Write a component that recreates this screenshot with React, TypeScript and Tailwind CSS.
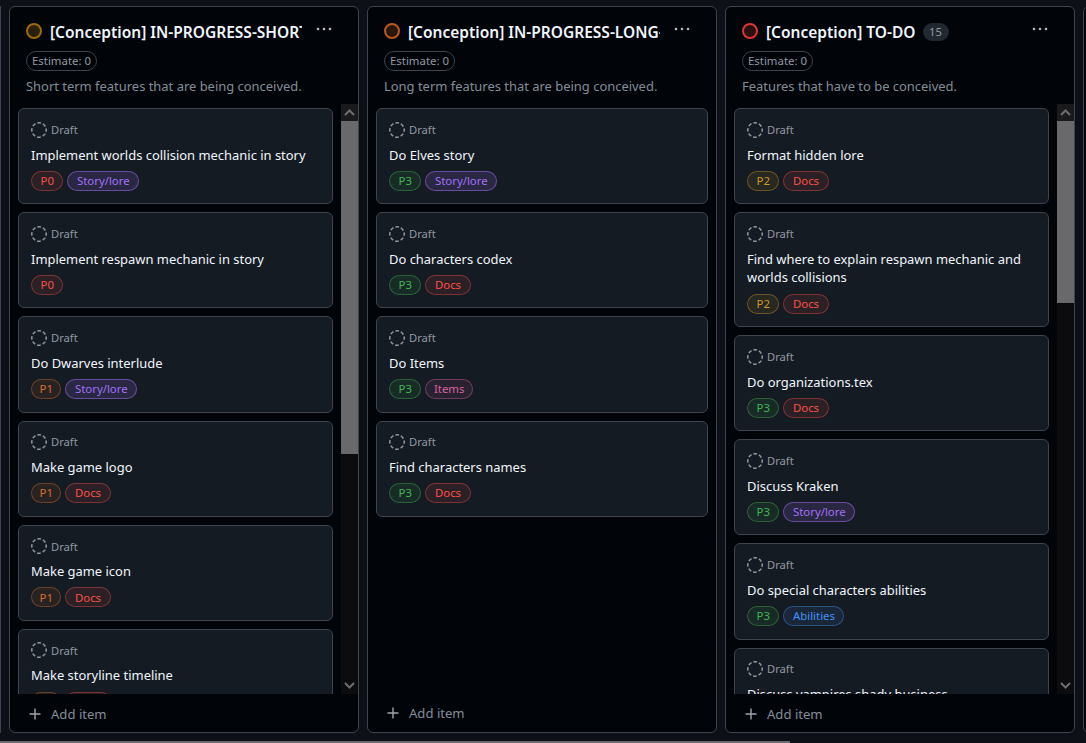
import React from "react";

type Tone = "red" | "orange" | "yellow" | "green" | "purple" | "blue" | "pink";
const toneCls: Record<Tone, string> = {
  red: "text-[#f85149] bg-[#f851491a] border-[#f8514966]",
  orange: "text-[#db6d28] bg-[#db6d281a] border-[#db6d2866]",
  yellow: "text-[#d29922] bg-[#d299221a] border-[#d2992266]",
  green: "text-[#3fb950] bg-[#3fb9501a] border-[#3fb95066]",
  purple: "text-[#a371f7] bg-[#a371f726] border-[#a371f780]",
  blue: "text-[#4493f8] bg-[#4493f81a] border-[#4493f866]",
  pink: "text-[#db61a2] bg-[#db61a21a] border-[#db61a266]",
};
const P: Record<string, Tone> = { P0: "red", P1: "orange", P2: "yellow", P3: "green" };
const K: Record<string, Tone> = { "Story/lore": "purple", Docs: "red", Items: "pink", Abilities: "blue" };

function Label({ text }: { text: string }) {
  const tone = P[text] ?? K[text];
  const pad = text === "P1" ? "px-[7.5px]" : text === "Items" ? "px-[7.5px]" : "px-[8.5px]";
  return (
    <span className={`inline-flex h-5 items-center rounded-full border text-[11.4px] leading-none ${pad} ${toneCls[tone]}`}>
      {text}
    </span>
  );
}

function DraftIcon() {
  return (
    <svg width="16" height="16" viewBox="0 0 16 16" fill="none" className="shrink-0">
      <circle cx="8" cy="8" r="7.2" stroke="#9198a1" strokeWidth="1.5" strokeDasharray="3.6 2.05" strokeDashoffset="1.8" />
    </svg>
  );
}

function Card({ title, labels }: { title: string; labels: string[] }) {
  return (
    <div className="shrink-0 rounded-md border border-[#3d444d] bg-[#151b23] px-3 pt-[12.5px] pb-[12.5px]">
      <div className="flex h-4 items-center gap-1 text-[11.2px] leading-none text-[#9198a1]">
        <DraftIcon />
        <span>Draft</span>
      </div>
      <div className="mt-[8px] text-[12.95px] leading-[18.67px] text-[#f0f6fc]">{title}</div>
      <div className="mt-[6.5px] flex gap-1">
        {labels.map((l) => (
          <Label key={l} text={l} />
        ))}
      </div>
    </div>
  );
}

function Chevron({ up }: { up: boolean }) {
  return (
    <svg width="11" height="7" viewBox="0 0 11 7" fill="none">
      <path d={up ? "M1 6 L5.5 1.5 L10 6" : "M1 1 L5.5 5.5 L10 1"} stroke="#6e6e70" strokeWidth="2" />
    </svg>
  );
}

function Scrollbar({ thumb }: { thumb: number }) {
  return (
    <div className="flex w-[17px] shrink-0 flex-col bg-[#0c0c0e]">
      <div className="flex h-[17px] items-center justify-center bg-[#1a1a1c]">
        <Chevron up />
      </div>
      <div className="flex-1">
        <div className="bg-[#69696c]" style={{ height: thumb }} />
      </div>
      <div className="flex h-[17px] items-center justify-center">
        <Chevron up={false} />
      </div>
    </div>
  );
}

function Column({
  status,
  fill,
  title,
  count,
  desc,
  cards,
  thumb,
  footerLift,
}: {
  status: string;
  fill: string;
  title: string;
  count?: number;
  desc: string;
  cards: { t: string; l: string[] }[];
  thumb?: number;
  footerLift?: boolean;
}) {
  return (
    <div className="flex h-full w-[350px] shrink-0 flex-col overflow-hidden rounded-md border border-[#3d444d] bg-[#010409]">
      <div className="relative h-[97px] shrink-0 pl-4 pt-4">
        <div className="flex h-4 items-center">
          <svg width="16" height="16" viewBox="0 0 16 16" className="shrink-0">
            <circle cx="8" cy="8" r="7" fill={fill} stroke={status} strokeWidth="2" />
          </svg>
          <div className="ml-2 flex items-center pt-[2px]">
            <div className="max-w-[252px] overflow-hidden whitespace-nowrap text-[15.5px] font-semibold leading-6 text-[#f0f6fc]">{title}</div>
            {count !== undefined && (
              <span className="ml-[7px] flex h-[18px] w-[26px] items-center justify-center rounded-full bg-[#212830] text-[11.2px] leading-none text-[#9198a1]">
                {count}
              </span>
            )}
          </div>
        </div>
        <svg width="16" height="16" viewBox="0 0 16 16" fill="#b7bdc8" className="absolute right-[26px] top-[14px]">
          <circle cx="2" cy="8" r="1.3" />
          <circle cx="8" cy="8" r="1.3" />
          <circle cx="14" cy="8" r="1.3" />
        </svg>
        <div className="mt-[12px] flex h-5 w-[71px] items-center justify-center rounded-full border border-[#3d444d] text-[11.4px] leading-none text-[#9198a1]">
          Estimate: 0
        </div>
        <div className="mt-[5px] text-[12.95px] leading-5 text-[#848d97]">{desc}</div>
      </div>
      <div className="flex min-h-0 flex-1 overflow-hidden">
        <div className="flex min-w-0 flex-1 flex-col gap-2 overflow-hidden pl-2 pr-2 pt-1">
          {cards.map((c) => (
            <Card key={c.t} title={c.t} labels={c.l} />
          ))}
        </div>
        {thumb !== undefined && <Scrollbar thumb={thumb} />}
      </div>
      <div className={`flex h-[38px] shrink-0 items-center gap-[10px] pl-[19px] text-[13.1px] text-[#848d97] ${footerLift ? "pt-[2px]" : "pt-[4px]"}`}>
        <svg width="12" height="12" viewBox="0 0 12 12" fill="none" className="-mt-[2px] shrink-0">
          <path d="M6 0.5 V11.5 M0.5 6 H11.5" stroke="#9ea6ae" strokeWidth="1.4" />
        </svg>
        <span>Add item</span>
      </div>
    </div>
  );
}

export default function App() {
  return (
    <div className="flex h-[743px] w-[1086px] flex-col overflow-hidden bg-[#0d1117] font-['Noto_Sans',sans-serif]">
      <div className="flex min-h-0 flex-1 gap-2 overflow-hidden pt-[6px] pb-[8px]">
        <div className="w-px shrink-0 bg-[#3d444d]" />
        <Column
          status="#9e6a03"
          fill="#2a1f08"
          title="[Conception] IN-PROGRESS-SHORT-TERM"
          desc="Short term features that are being conceived."
          thumb={333}
          cards={[
            { t: "Implement worlds collision mechanic in story", l: ["P0", "Story/lore"] },
            { t: "Implement respawn mechanic in story", l: ["P0"] },
            { t: "Do Dwarves interlude", l: ["P1", "Story/lore"] },
            { t: "Make game logo", l: ["P1", "Docs"] },
            { t: "Make game icon", l: ["P1", "Docs"] },
            { t: "Make storyline timeline", l: ["P1", "Docs"] },
          ]}
        />
        <Column
          status="#bd561d"
          fill="#2a170d"
          title="[Conception] IN-PROGRESS-LONG-TERM"
          desc="Long term features that are being conceived."
          footerLift
          cards={[
            { t: "Do Elves story", l: ["P3", "Story/lore"] },
            { t: "Do characters codex", l: ["P3", "Docs"] },
            { t: "Do Items", l: ["P3", "Items"] },
            { t: "Find characters names", l: ["P3", "Docs"] },
          ]}
        />
        <Column
          status="#da3633"
          fill="#2a0f10"
          title="[Conception] TO-DO"
          count={15}
          desc="Features that have to be conceived."
          thumb={182}
          cards={[
            { t: "Format hidden lore", l: ["P2", "Docs"] },
            { t: "Find where to explain respawn mechanic and worlds collisions", l: ["P2", "Docs"] },
            { t: "Do organizations.tex", l: ["P3", "Docs"] },
            { t: "Discuss Kraken", l: ["P3", "Story/lore"] },
            { t: "Do special characters abilities", l: ["P3", "Abilities"] },
            { t: "Discuss vampires shady business", l: ["P3", "Story/lore"] },
          ]}
        />
        <div className="w-[350px] shrink-0 rounded-md border border-[#3d444d] bg-[#010409]" />
      </div>
      <div className="h-[2px] w-[790px] shrink-0 bg-[#6b6b6e]" />
    </div>
  );
}
